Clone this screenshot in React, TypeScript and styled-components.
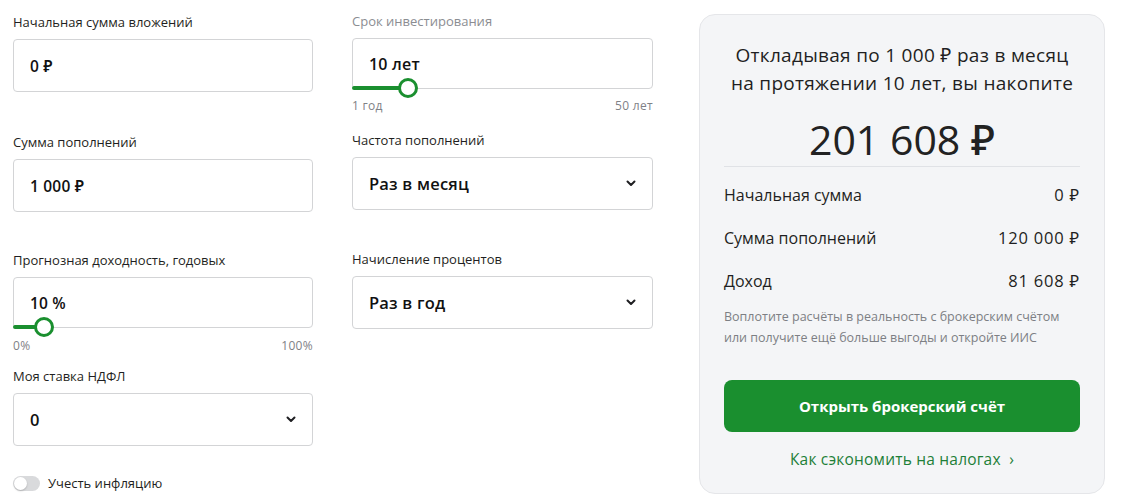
import React from "react";
import styled, { createGlobalStyle } from "styled-components";

const GlobalStyle = createGlobalStyle`
  html, body { margin: 0; padding: 0; background: #ffffff; }
  body {
    font-family: "Open Sans", "Noto Sans", "DejaVu Sans", sans-serif;
    color: #1f1f22;
    -webkit-font-smoothing: antialiased;
  }
  * { box-sizing: border-box; }
`;

const Page = styled.div`
  display: flex;
  align-items: flex-start;
  width: 1122px;
  height: 504px;
  padding-left: 13px;
`;

const FormColumn = styled.div<{ $pt: number; $mr: number }>`
  display: flex;
  flex-direction: column;
  width: 300px;
  padding-top: ${(p) => p.$pt}px;
  margin-right: ${(p) => p.$mr}px;
`;

const Field = styled.div<{ $mt?: number; $w?: number }>`
  display: flex;
  flex-direction: column;
  margin-top: ${(p) => p.$mt ?? 0}px;
  width: ${(p) => p.$w ?? 300}px;
`;

const Label = styled.div<{ $muted?: boolean }>`
  font-size: 13px;
  line-height: 16px;
  color: ${(p) => (p.$muted ? "#8b8d92" : "#1f1f22")};
  margin-bottom: 9px;
  white-space: nowrap;
`;

const InputBox = styled.div<{ $h: number }>`
  position: relative;
  height: ${(p) => p.$h}px;
  border: 1px solid #d3d4d6;
  border-radius: 4px;
  background: #fff;
  display: flex;
  align-items: center;
  justify-content: space-between;
  padding: 0 16px 0 16px;
`;

const Value = styled.span<{ $size?: number }>`
  font-size: ${(p) => p.$size ?? 15.5}px;
  font-weight: 600;
  color: #111;
  letter-spacing: 0.2px;
`;

const Track = styled.div`
  position: absolute;
  left: -1px;
  bottom: -2px;
  height: 4px;
  background: #1a8f2f;
  border-radius: 2px 0 0 2px;
`;

const Thumb = styled.div`
  position: absolute;
  bottom: -10px;
  width: 20px;
  height: 20px;
  margin-left: -10px;
  border-radius: 50%;
  border: 3.5px solid #1a8f2f;
  background: #fff;
`;

const RangeLabels = styled.div<{ $mt: number }>`
  display: flex;
  justify-content: space-between;
  margin-top: ${(p) => p.$mt}px;
  font-size: 12px;
  line-height: 14px;
  color: #7f8186;
  letter-spacing: 0.3px;
`;

const Chevron = () => (
  <svg width="10" height="7" viewBox="0 0 10 7" fill="none">
    <path d="M1.5 1.5 L5 5 L8.5 1.5" stroke="#1f1f22" strokeWidth="2" strokeLinecap="round" strokeLinejoin="round" />
  </svg>
);

const ToggleRow = styled.div<{ $mt: number }>`
  display: flex;
  align-items: center;
  gap: 8px;
  margin-top: ${(p) => p.$mt}px;
  font-size: 13px;
  line-height: 16px;
`;

const Switch = styled.div`
  position: relative;
  width: 27px;
  height: 15px;
  border-radius: 8px;
  background: #d9dadc;
  &::after {
    content: "";
    position: absolute;
    left: 1px;
    top: 1px;
    width: 13px;
    height: 13px;
    border-radius: 50%;
    background: #fff;
    box-shadow: 0 1px 2px rgba(0, 0, 0, 0.2);
  }
`;

const Card = styled.div`
  margin-left: 47px;
  margin-top: 14px;
  width: 406px;
  height: 480px;
  background: #f4f5f7;
  border: 1px solid #e5e6e9;
  border-radius: 16px;
  padding: 26px 24px 0 24px;
  display: flex;
  flex-direction: column;
`;

const Heading = styled.div`
  font-size: 19px;
  line-height: 28px;
  text-align: center;
  color: #1f1f22;
  letter-spacing: 0.3px;
`;

const Total = styled.div`
  margin-top: 18px;
  font-size: 41px;
  line-height: 48px;
  text-align: center;
  font-weight: 500;
  color: #222;
`;

const Divider = styled.div`
  margin-top: 3px;
  height: 1px;
  background: #e0e2e6;
`;

const Rows = styled.div`
  display: flex;
  flex-direction: column;
  gap: 23px;
  margin-top: 18px;
`;

const Row = styled.div`
  display: flex;
  justify-content: space-between;
  font-size: 16px;
  line-height: 20px;
  color: #1f1f22;
`;

const RowValue = styled.span`
  font-size: 16.5px;
  letter-spacing: 0.8px;
`;

const Note = styled.div`
  margin-top: 15px;
  font-size: 12.5px;
  line-height: 21px;
  color: #7d7f84;
`;

const Button = styled.button`
  margin-top: 32px;
  height: 52px;
  width: 100%;
  border: 0;
  border-radius: 8px;
  background: #1a8f2f;
  color: #fff;
  font-family: inherit;
  font-size: 15px;
  font-weight: 700;
  cursor: pointer;
`;

const LinkText = styled.a`
  margin-top: 17px;
  text-align: center;
  font-size: 15.5px;
  line-height: 20px;
  color: #1d7f38;
  text-decoration: none;
  letter-spacing: 0.2px;
`;

function SliderInput({ value, pct, size }: { value: string; pct: number; size?: number }) {
  return (
    <InputBox $h={51}>
      <Value $size={size}>{value}</Value>
      <Track style={{ width: `${pct}%` }} />
      <Thumb style={{ left: `${pct}%` }} />
    </InputBox>
  );
}

function Select({ value }: { value: string }) {
  return (
    <InputBox $h={53}>
      <Value $size={16.5}>{value}</Value>
      <Chevron />
    </InputBox>
  );
}

export default function App() {
  const yearsPct = ((10 - 1) / 49) * 100;
  return (
    <>
      <GlobalStyle />
      <Page>
        <FormColumn $pt={14} $mr={39}>
          <Field>
            <Label>Начальная сумма вложений</Label>
            <InputBox $h={53}>
              <Value>0 ₽</Value>
            </InputBox>
          </Field>
          <Field $mt={42}>
            <Label>Сумма пополнений</Label>
            <InputBox $h={53}>
              <Value>1 000 ₽</Value>
            </InputBox>
          </Field>
          <Field $mt={40}>
            <Label>Прогнозная доходность, годовых</Label>
            <SliderInput value="10 %" pct={10} />
            <RangeLabels $mt={11}>
              <span>0%</span>
              <span>100%</span>
            </RangeLabels>
          </Field>
          <Field $mt={15}>
            <Label>Моя ставка НДФЛ</Label>
            <Select value="0" />
          </Field>
          <ToggleRow $mt={29}>
            <Switch />
            <span>Учесть инфляцию</span>
          </ToggleRow>
        </FormColumn>

        <FormColumn $pt={13} $mr={0}>
          <Field $w={301}>
            <Label $muted>Срок инвестирования</Label>
            <SliderInput value="10 лет" pct={yearsPct} size={16} />
            <RangeLabels $mt={10}>
              <span>1 год</span>
              <span>50 лет</span>
            </RangeLabels>
          </Field>
          <Field $mt={19} $w={301}>
            <Label>Частота пополнений</Label>
            <Select value="Раз в месяц" />
          </Field>
          <Field $mt={41} $w={301}>
            <Label>Начисление процентов</Label>
            <Select value="Раз в год" />
          </Field>
        </FormColumn>

        <Card>
          <Heading>
            Откладывая по 1 000 ₽ раз в месяц
            <br />
            на протяжении 10 лет, вы накопите
          </Heading>
          <Total>201 608 ₽</Total>
          <Divider />
          <Rows>
            <Row>
              <span>Начальная сумма</span>
              <RowValue>0 ₽</RowValue>
            </Row>
            <Row>
              <span>Сумма пополнений</span>
              <RowValue>120 000 ₽</RowValue>
            </Row>
            <Row>
              <span>Доход</span>
              <RowValue>81 608 ₽</RowValue>
            </Row>
          </Rows>
          <Note>
            Воплотите расчёты в реальность с брокерским счётом
            <br />
            или получите ещё больше выгоды и откройте ИИС
          </Note>
          <Button>Открыть брокерский счёт</Button>
          <LinkText href="#">Как сэкономить на налогах&nbsp;&nbsp;›</LinkText>
        </Card>
      </Page>
    </>
  );
}
